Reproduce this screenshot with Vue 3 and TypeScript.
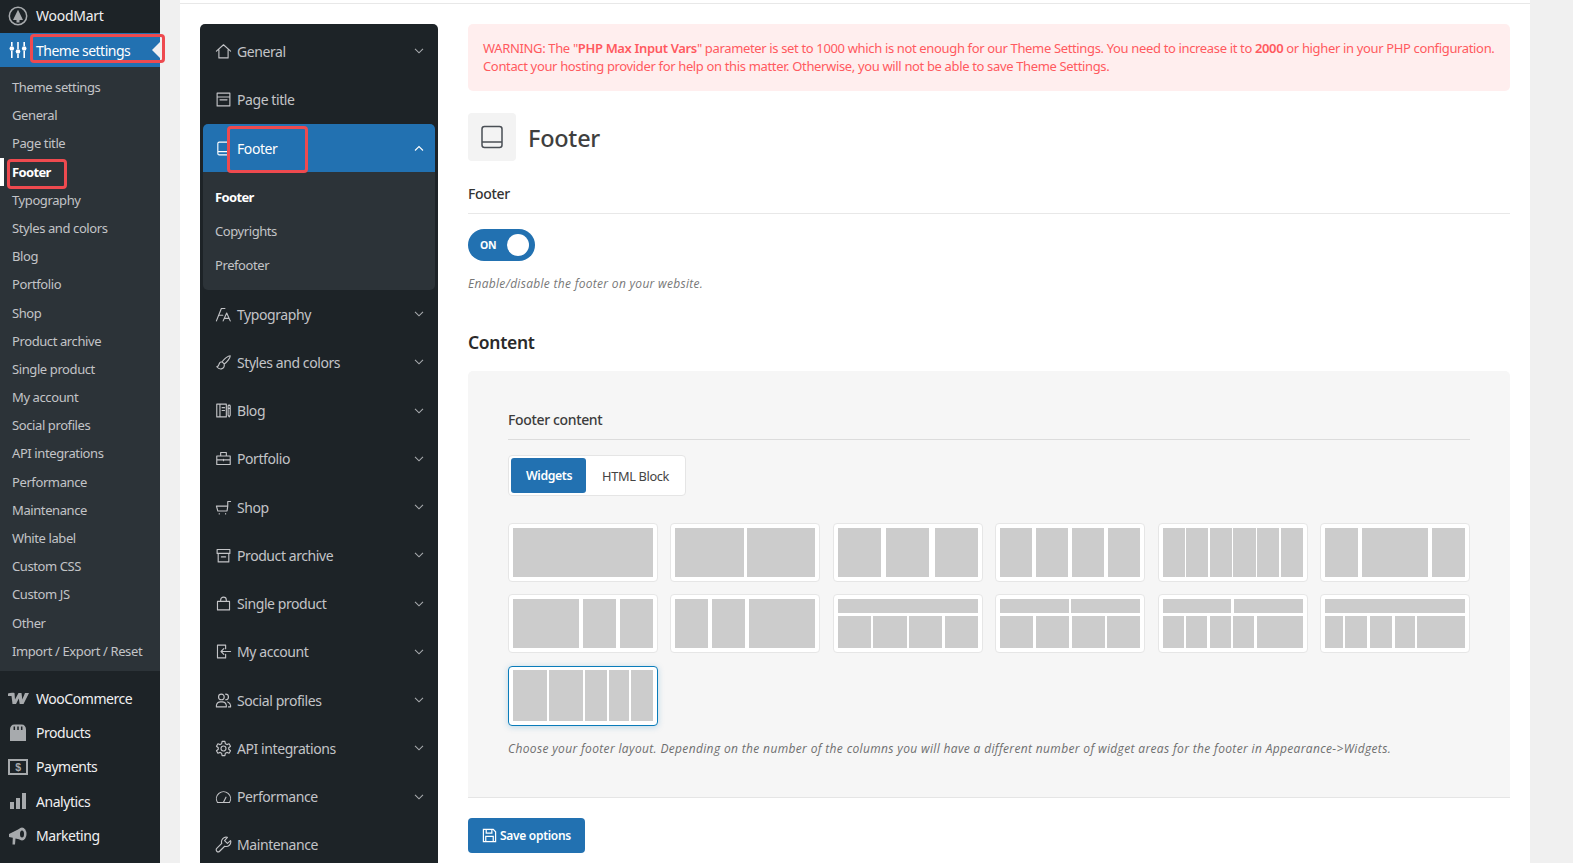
<script setup lang="ts">
interface NavItem { label: string; icon: string; chev?: boolean; open?: boolean }
interface Tile { gap: number; top?: number[]; cols: number[]; selected?: boolean }

const wpSub: string[] = ['Theme settings','General','Page title','Footer','Typography','Styles and colors','Blog','Portfolio','Shop','Product archive','Single product','My account','Social profiles','API integrations','Performance','Maintenance','White label','Custom CSS','Custom JS','Other','Import / Export / Reset']

const icons: Record<string, string> = {
  home: 'M2 11.500 12 2.500l10 9M5.500 9.500V21h13V9.500',
  page: 'M3 3h18v18H3zM3 8.500h18M7 12.500h10',
  footer: 'M6 3h12a2 2 0 0 1 2 2v14a2 2 0 0 1-2 2H6a2 2 0 0 1-2-2V5a2 2 0 0 1 2-2zM4 16.500h16',
  type: 'M2 21 9 3.500h5M5 13h6M11.500 21l5-11 5 11M13.500 17.500h6',
  brush: 'M21.500 2.500c-3 0-8.500 4-11.500 8.500l3 3c4.500-3 8.500-8.500 8.500-11.500zM10 11c-3 0-4 2-4.500 4-.3 1.500-1 2.500-3 3 2 2.500 4 3.500 6.500 3 3-.5 4.500-3.500 4-7',
  blog: 'M2.500 3h13.500v18H2.500zM7 3v18M10 8h3.500M10 12h3.500M18.500 5.500c0-1.500 3-1.500 3 0v13l-1.500 2.500-1.500-2.500zM18.500 9h3',
  case: 'M2.500 8.500h19v12h-19zM8 8.500V3.500h8v5M2.500 14h19M12 13v2',
  cart: 'M2 10h16l-1 7H4zM18 10V3.500h4M6 20.500v.5M15 20.500v.5',
  archive: 'M3 3.500h18v5.500H3zM4.500 9v12h15V9M9 14h6',
  bag: 'M3.500 9h17v12h-17zM8 9V7a4 4 0 0 1 8 0v2',
  login: 'M15 3H3.500v18H15M15 3v5M15 16v5M8.500 12H22M12.500 8 8.500 12l4 4',
  users: 'M9 11a4 4 0 1 0 0-8 4 4 0 0 0 0 8zM2 21v-2a6 6 0 0 1 6-5h2a6 6 0 0 1 6 5v2zM15 3a4 4 0 0 1 0 8M18 14a6 6 0 0 1 4 5v2h-3',
  gear: 'M12 15.500a3.500 3.500 0 1 0 0-7 3.500 3.500 0 0 0 0 7zM10 2h4l.6 3.300 2.200 1.200 3.100-1.100 2 3.500-2.500 2.100v2l2.500 2.100-2 3.500-3.100-1.100-2.200 1.200L14 22h-4l-.6-3.300-2.200-1.200-3.100 1.100-2-3.500 2.500-2.100v-2L2.100 8.900l2-3.500 3.100 1.100 2.200-1.200z',
  gauge: 'M3.500 20.500a10 10 0 1 1 17 0zM12 20l3.500-7',
  wrench: 'M22 6.500l-4.500 4-4-4 4-4.500a6.500 6.500 0 0 0-8 8.300L2.500 17.500a2.800 2.800 0 0 0 4 4l7.200-7a6.500 6.500 0 0 0 8.300-8z',
}

const nav: NavItem[] = [
  { label: 'General', icon: 'home', chev: true },
  { label: 'Page title', icon: 'page' },
  { label: 'Footer', icon: 'footer', chev: true, open: true },
  { label: 'Typography', icon: 'type', chev: true },
  { label: 'Styles and colors', icon: 'brush', chev: true },
  { label: 'Blog', icon: 'blog', chev: true },
  { label: 'Portfolio', icon: 'case', chev: true },
  { label: 'Shop', icon: 'cart', chev: true },
  { label: 'Product archive', icon: 'archive', chev: true },
  { label: 'Single product', icon: 'bag', chev: true },
  { label: 'My account', icon: 'login', chev: true },
  { label: 'Social profiles', icon: 'users', chev: true },
  { label: 'API integrations', icon: 'gear', chev: true },
  { label: 'Performance', icon: 'gauge', chev: true },
  { label: 'Maintenance', icon: 'wrench' },
]

const tiles: Tile[] = [
  { gap: 3, cols: [1] },
  { gap: 3, cols: [1, 1] },
  { gap: 5.5, cols: [1, 1, 1] },
  { gap: 4, cols: [1, 1, 1, 1] },
  { gap: 1.500, cols: [1, 1, 1, 1, 1, 1] },
  { gap: 3.700, cols: [1, 2, 1] },
  { gap: 4, cols: [2, 1, 1] },
  { gap: 4, cols: [1, 1, 2] },
  { gap: 2.500, top: [1], cols: [1, 1, 1, 1] },
  { gap: 2.500, top: [1, 1], cols: [1, 1, 1, 1] },
  { gap: 2.500, top: [1, 1], cols: [1, 1, 1, 1, 2.200] },
  { gap: 2.500, top: [1], cols: [1, 1.250, 1.250, 1.150, 2.700] },
  { gap: 2, cols: [3.400, 3.400, 2.170, 1.970, 2.170], selected: true },
]
</script>

<template>
  <div class="page">
    <aside class="wp">
      <div class="wp-top">
        <span class="wp-ico">
          <svg width="20" height="20" viewBox="0 0 20 20"><circle cx="10" cy="10" r="8.700" fill="none" stroke="#a7aaad" stroke-width="1.500"/><path d="M10 3.800 15 14h-3.500v2.500h-3V14H5z" fill="#a7aaad"/></svg>
        </span>
        WoodMart
      </div>
      <div class="wp-active">
        <span class="wp-ico">
          <svg width="20" height="20" viewBox="0 0 20 20" fill="#fff"><path d="M3 2h1.600v4H3zM3 11h1.600v7H3zM9.200 2h1.600v7H9.200zM9.200 14h1.600v4H9.200zM15.400 2h1.600v4h-1.600zM15.400 11h1.600v7h-1.600z"/><circle cx="3.800" cy="8.500" r="2.300"/><circle cx="10" cy="11.500" r="2.300"/><circle cx="16.200" cy="8.500" r="2.300"/></svg>
        </span>
        Theme settings
        <i class="wp-arrow"></i>
      </div>
      <ul class="wp-sub">
        <li v-for="s in wpSub" :key="s" :class="{ cur: s === 'Footer' }">{{ s }}</li>
      </ul>
      <div class="wp-rows">
        <div class="wp-row">
          <span class="wp-ico">
            <svg width="21" height="13" viewBox="0 0 21 13" fill="#a7aaad"><path d="M0 1.500C2 .5 5 .5 6.500 1L7 7.500 10.500 1h3l.8 6.500L17 1h4l-5.500 11h-3.800l-.9-5.500L8 12H4.500L3.500 4 0 4z"/></svg>
          </span>WooCommerce
        </div>
        <div class="wp-row">
          <span class="wp-ico">
            <svg width="20" height="20" viewBox="0 0 20 20" fill="#a7aaad"><path d="M6.500 1.500h7c2.800 0 4.500 2 4.500 5V18H2V6.500c0-3 1.700-5 4.500-5z"/><path d="M6.300 3.500v3.500M10 3.500v3.500M13.700 3.500v3.500" stroke="#1d2327" stroke-width="1.500"/></svg>
          </span>Products
        </div>
        <div class="wp-row">
          <span class="wp-ico">
            <svg width="20" height="16" viewBox="0 0 20 16"><rect x="1" y="1" width="18" height="14" fill="none" stroke="#a7aaad" stroke-width="2"/><text x="10" y="12" text-anchor="middle" font-size="10.500" font-weight="700" fill="#a7aaad" font-family="Liberation Sans, sans-serif">$</text></svg>
          </span>Payments
        </div>
        <div class="wp-row">
          <span class="wp-ico">
            <svg width="18" height="18" viewBox="0 0 18 18" fill="#a7aaad"><path d="M1 10h4v7H1zM7 6h4v11H7zM13 1h4v16h-4z"/></svg>
          </span>Analytics
        </div>
        <div class="wp-row">
          <span class="wp-ico">
            <svg width="20" height="20" viewBox="0 0 20 20" fill="#a7aaad"><path d="M1 8 12 2.500v11l-4.500-1L7 18.500H4.500l.3-6.700L1 11z"/><ellipse cx="14" cy="8" rx="4.500" ry="6.500"/><ellipse cx="14" cy="8" rx="2" ry="3.500" fill="#1d2327"/></svg>
          </span>Marketing
        </div>
      </div>
    </aside>

    <main class="panel">
      <nav class="side">
        <template v-for="n in nav" :key="n.label">
          <div class="side-row" :class="{ open: n.open }">
            <svg class="side-ico" width="17" height="17" viewBox="0 0 24 24" fill="none" stroke="currentColor" stroke-width="1.600" stroke-linejoin="round" stroke-linecap="round"><path :d="icons[n.icon]"/></svg>
            <span class="side-label">{{ n.label }}</span>
            <svg v-if="n.chev" class="chev" width="10" height="6" viewBox="0 0 10 6" fill="none" stroke="currentColor" stroke-width="1.100"><path :d="n.open ? 'M1 5.500 5 1.500l4 4' : 'M1 .8l4 4 4-4'"/></svg>
          </div>
          <ul v-if="n.open" class="side-sub">
            <li class="cur">Footer</li>
            <li>Copyrights</li>
            <li>Prefooter</li>
          </ul>
        </template>
      </nav>

      <section class="content">
        <div class="alert">
          WARNING: The "<b>PHP Max Input Vars</b>" parameter is set to 1000 which is not enough for our Theme Settings. You need to increase it to <b>2000</b> or higher in your PHP configuration.<br>
          Contact your hosting provider for help on this matter. Otherwise, you will not be able to save Theme Settings.
        </div>

        <header class="head">
          <span class="head-ico">
            <svg width="24" height="24" viewBox="0 0 24 24" fill="none" stroke="#4a4f55" stroke-width="1.500"><rect x="2" y="1.500" width="20" height="21" rx="2.500"/><path d="M2 17h20"/></svg>
          </span>
          <h1>Footer</h1>
        </header>

        <h3 class="label">Footer</h3>
        <div class="toggle"><span>ON</span><i></i></div>
        <p class="desc">Enable/disable the footer on your website.</p>

        <h2 class="sec">Content</h2>
        <div class="box">
          <h3 class="label inner">Footer content</h3>
          <div class="tabs">
            <span class="tab on">Widgets</span>
            <span class="tab">HTML Block</span>
          </div>
          <div class="grid">
            <div v-for="(t, i) in tiles" :key="i" class="tile" :class="{ sel: t.selected }">
              <div v-if="t.top" class="tile-row top" :style="{ gap: t.gap + 'px' }">
                <b v-for="(w, j) in t.top" :key="j" :style="{ flexGrow: w }"></b>
              </div>
              <div class="tile-row" :style="{ gap: t.gap + 'px' }">
                <b v-for="(w, j) in t.cols" :key="j" :style="{ flexGrow: w }"></b>
              </div>
            </div>
          </div>
          <p class="desc big">Choose your footer layout. Depending on the number of the columns you will have a different number of widget areas for the footer in Appearance-&gt;Widgets.</p>
        </div>

        <button class="save" type="button">
          <svg width="15" height="15" viewBox="0 0 16 16" fill="none" stroke="#fff" stroke-width="1.300"><path d="M1.500 1.500h10.500l2.500 2.500v10.500h-13zM4.500 1.500v4h6v-4M4 14.500V9h8v5.500"/></svg>
          Save options
        </button>
      </section>
    </main>

    <span class="mark m1"></span>
    <span class="mark m2"></span>
    <span class="mark m3"></span>
  </div>
</template>

<style>
html, body { margin: 0; background: #f0f0f0; overflow: hidden; }
</style>

<style scoped>
* { box-sizing: border-box; }
.page { position: relative; display: flex; height: 863px; width: 1573px; overflow: hidden; font-family: "Noto Sans", "Open Sans", sans-serif; color: #3c434a; letter-spacing: -0.35px; }

.wp { width: 160px; flex: none; background: #1d2327; color: #f0f0f1; font-size: 14px; }
.wp-top { height: 33px; padding-bottom: 2px; display: flex; align-items: center; letter-spacing: -0.25px; }
.wp-ico { width: 36px; flex: none; display: flex; justify-content: center; align-items: center; }
.wp-active { position: relative; height: 34px; background: #2271b1; color: #fff; display: flex; align-items: center; letter-spacing: -0.5px; }
.wp-arrow { position: absolute; right: 0; top: 9px; border: 8px solid transparent; border-right-color: #f0f0f1; border-left-width: 0; }
.wp-sub { list-style: none; margin: 0; padding: 6px 0; background: #2c3338; font-size: 13px; color: #c3c4c7; letter-spacing: -0.4px; }
.wp-sub li { height: 28.200px; line-height: 29px; padding-left: 12px; position: relative; white-space: nowrap; }
.wp-sub li.cur { color: #fff; font-weight: 700; letter-spacing: -0.65px; }
.wp-sub li.cur::before { content: ""; position: absolute; left: 0; top: 0; width: 4px; height: 28px; background: #fff; }
.wp-rows { margin-top: 10px; letter-spacing: -0.45px; }
.wp-row { height: 34.400px; display: flex; align-items: center; }

.panel { width: 1350px; flex: none; margin-left: 20px; background: #fff; display: flex; align-items: flex-start; padding: 24px 20px 0 20px; position: relative; }
.panel::before { content: ""; position: absolute; left: 0; right: 0; top: 3px; height: 1px; background: #e8e8e8; }

.side { width: 238px; flex: none; background: #1d2327; border-radius: 5px 5px 0 0; padding-top: 3px; color: #c3c4c7; font-size: 14px; height: 860px; letter-spacing: -0.42px; }
.side-row { height: 48.260px; display: flex; align-items: center; padding: 0 14px 0 15px; }
.side-ico { flex: none; margin-right: 5px; }
.side-label { flex: 1; white-space: nowrap; }
.chev { flex: none; color: #a7aaad; }
.side-row.open { margin: 0.500px 3px 0; padding: 0 11px 0 12px; background: #2271b1; color: #fff; border-radius: 5px 5px 0 0; height: 48px; }
.side-row.open .chev { color: #fff; }
.side-sub { list-style: none; margin: 0 3px; padding: 8px 12px 8px; background: #2c3338; border-radius: 0 0 5px 5px; font-size: 13px; }
.side-sub li { height: 34px; line-height: 34px; }
.side-sub li.cur { color: #fff; font-weight: 700; letter-spacing: -0.65px; }

.content { width: 1042px; flex: none; margin-left: 30px; }
.alert { height: 67px; background: #ffeeee; border-radius: 5px; padding: 15px 15px; font-size: 13px; line-height: 18px; color: #ff5a5f; white-space: nowrap; }
.alert b { font-weight: 600; }
.head { display: flex; align-items: center; margin-top: 22px; }
.head-ico { width: 48px; height: 48px; background: #f3f3f3; border-radius: 4px; display: flex; align-items: center; justify-content: center; }
.head h1 { margin: 2px 0 0 12px; font-size: 23.500px; font-weight: 500; color: #3f3f3f; letter-spacing: -0.25px; }
.label { margin: 0; font-size: 14px; font-weight: 500; color: #333; }
.content > .label { margin-top: 23px; height: 30px; line-height: 20px; border-bottom: 1px solid #e8e8e8; }
.toggle { margin-top: 14.500px; width: 67px; height: 32px; background: #2271b1; border-radius: 16px; position: relative; color: #fff; font-size: 10.500px; font-weight: 700; letter-spacing: -0.2px; line-height: 32px; padding-left: 12px; }
.toggle i { position: absolute; right: 6px; top: 5px; width: 22px; height: 22px; border-radius: 50%; background: #fff; }
.desc { margin: 14.500px 0 0; font-family: "Open Sans", "Noto Sans", sans-serif; font-size: 12px; line-height: 18px; font-style: italic; color: #777; letter-spacing: 0.3px; }
.sec { margin: 36.500px 0 0; font-size: 17.500px; line-height: 24px; font-weight: 600; color: #2a2a2a; letter-spacing: -0.3px; }
.box { margin-top: 17px; height: 427px; background: #f6f6f6; border-radius: 5px 5px 0 0; border-bottom: 1px solid #e5e5e5; padding: 39px 40px 0; }
.label.inner { height: 30px; line-height: 20px; border-bottom: 1px solid #dcdcdc; color: #3c3c3c; }
.tabs { display: inline-flex; margin-top: 15.500px; height: 41px; padding: 2px; background: #fff; border: 1px solid #e5e5e5; border-radius: 4px; font-size: 12.800px; vertical-align: top; }
.tab { display: flex; align-items: center; padding: 0 16px; width: 97px; color: #444; white-space: nowrap; }
.tab.on { width: 75px; background: #2271b1; color: #fff; font-weight: 600; font-size: 12.300px; letter-spacing: -0.4px; border-radius: 3px; padding: 0 15px; }
.grid { display: grid; grid-template-columns: repeat(6, 1fr); gap: 12.900px 12.900px; margin-top: 27px; }
.tile { height: 58.500px; padding: 3.700px; background: #fff; border: 1px solid #e6e6e6; border-radius: 4px; display: flex; flex-direction: column; gap: 3px; }
.tile.sel { height: 60px; border-color: #0a7cba; box-shadow: 0 1px 6px rgba(10,124,186,.25); }
.tile-row { flex: 1; display: flex; min-height: 0; }
.tile-row.top { flex: none; height: 14px; }
.tile-row b { display: block; flex-basis: 0; background: #ccc; }
.desc.big { margin-top: 14.500px; color: #6e6e6e; white-space: nowrap; letter-spacing: 0.35px; }
.save { display: flex; align-items: center; gap: 3px; margin-top: 20.500px; height: 35px; width: 117px; padding: 0 0 0 14px; background: #2271b1; color: #fff; border: 0; border-radius: 4px; font-family: inherit; font-size: 12px; font-weight: 600; letter-spacing: -0.3px; white-space: nowrap; }

.mark { position: absolute; border: 3px solid #ee4a4f; border-radius: 4px; pointer-events: none; }
.m1 { left: 30px; top: 34px; width: 135px; height: 29px; }
.m2 { left: 7px; top: 159px; width: 60px; height: 30px; }
.m3 { left: 227px; top: 126px; width: 81px; height: 47px; }
</style>
